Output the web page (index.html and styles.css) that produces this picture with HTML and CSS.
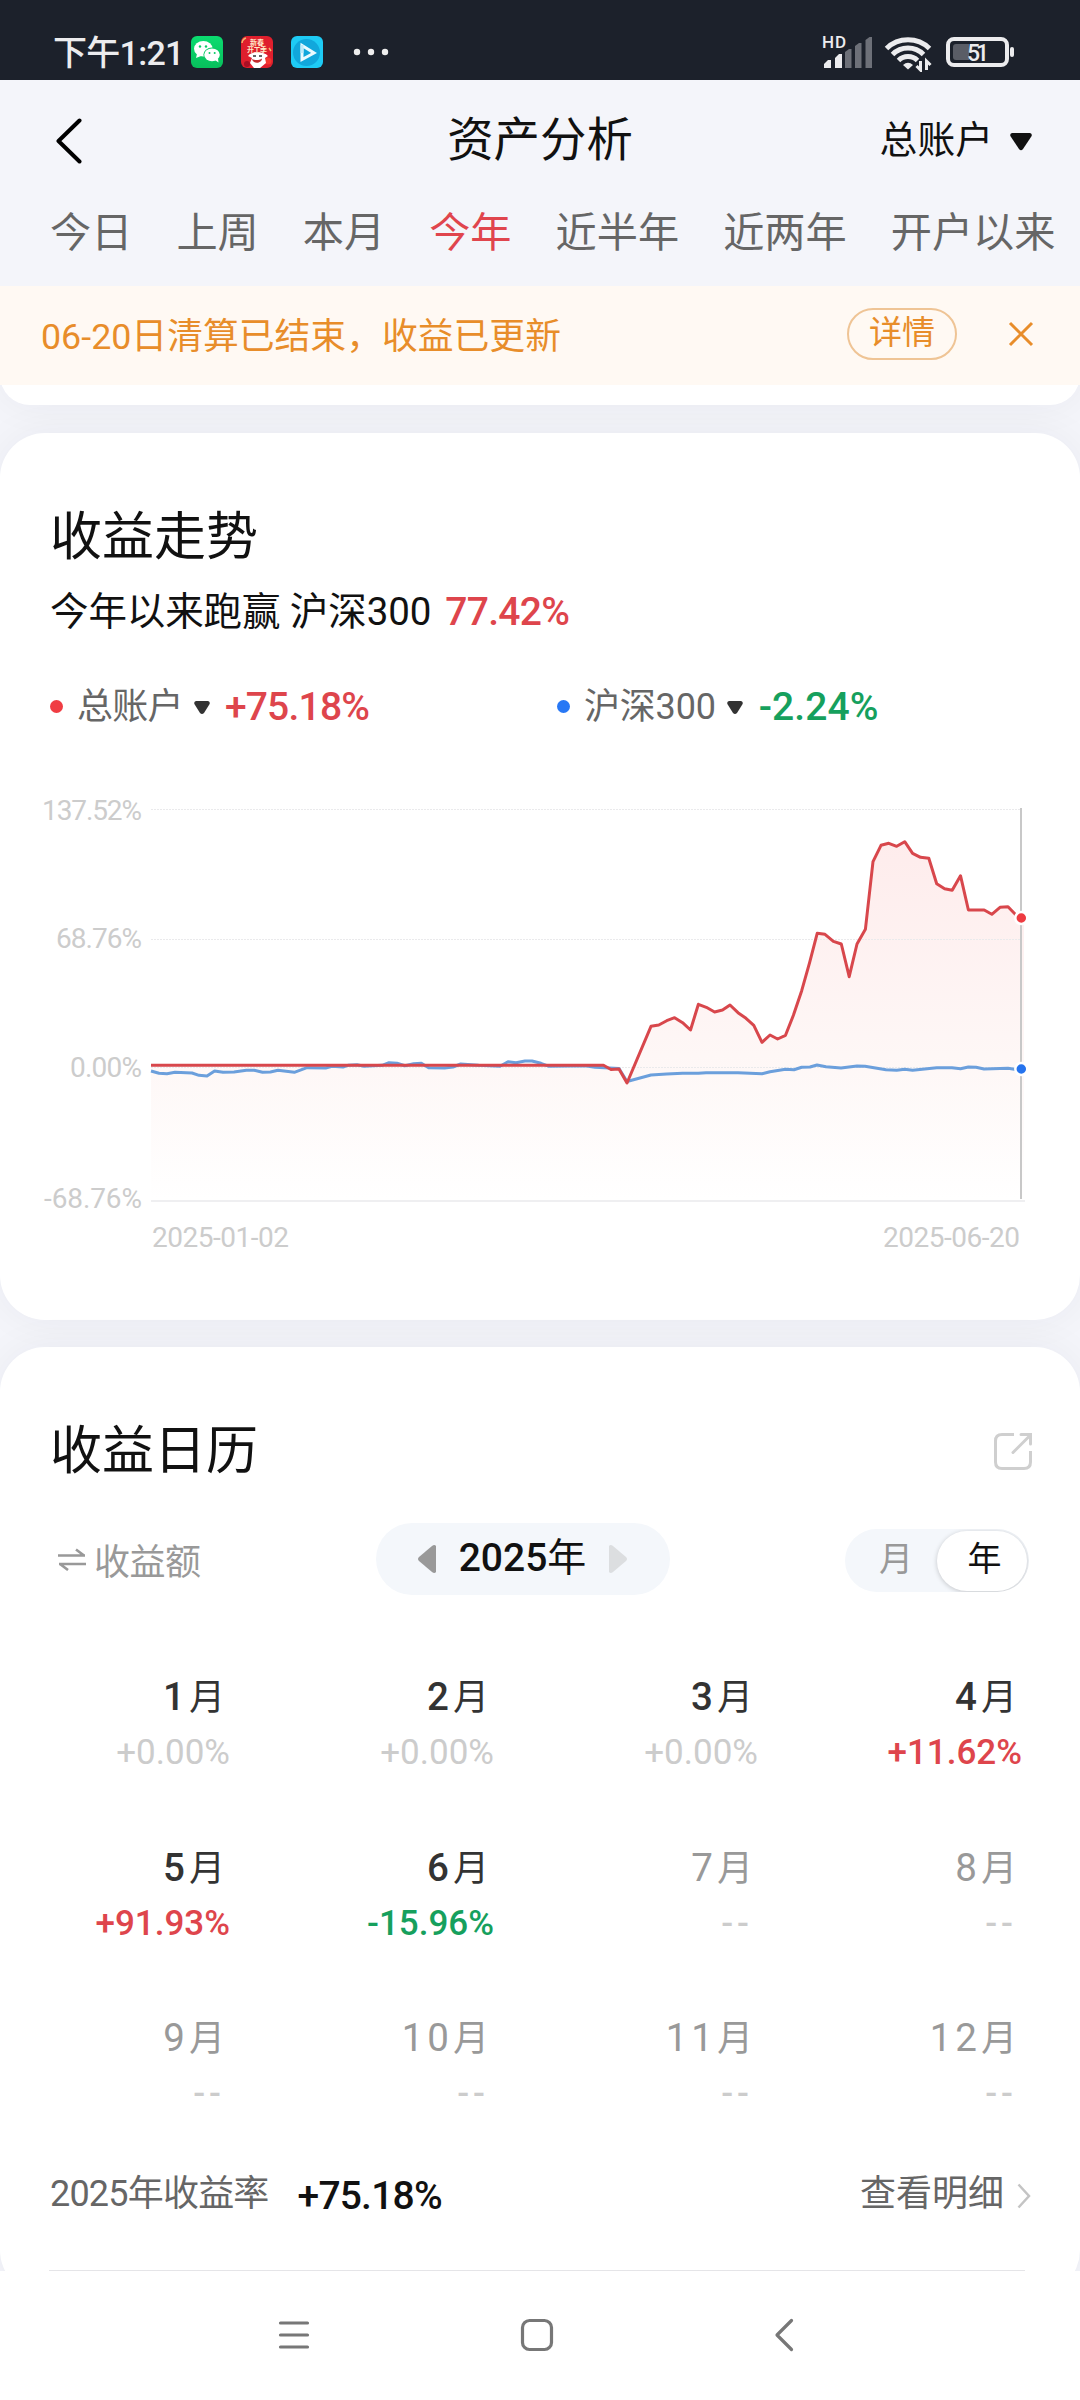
FILE: index.html
```html
<!DOCTYPE html>
<html lang="zh-CN">
<head>
<meta charset="utf-8">
<title>资产分析</title>
<link rel="stylesheet" href="styles.css">
</head>
<body>
<div class="screen">
  <div class="status-bar">
    <span class="clock">下午1:21</span>
    <div class="notif-icons">
      <svg width="32" height="32" viewBox="0 0 32 32">
        <defs><linearGradient id="wx" x1="0" y1="0" x2="0" y2="1"><stop offset="0" stop-color="#0bdc70"/><stop offset="1" stop-color="#08bf5c"/></linearGradient></defs>
        <rect width="32" height="32" rx="6" fill="url(#wx)"/>
        <ellipse cx="12.3" cy="12.8" rx="9.3" ry="7.8" fill="#fff"/><path d="M6 18l-1 4 5-2z" fill="#fff"/>
        <ellipse cx="21" cy="18.8" rx="8.6" ry="7.2" fill="#0acb65"/>
        <ellipse cx="21" cy="18.8" rx="7.8" ry="6.4" fill="#fff"/><path d="M24 24l3.5 2.5-.5-4z" fill="#fff"/>
        <g fill="#0acb65"><circle cx="9" cy="10.5" r="1.2"/><circle cx="15" cy="10.5" r="1.2"/><circle cx="18.5" cy="17" r="1"/><circle cx="23.7" cy="17" r="1"/></g>
      </svg>
      <svg width="32" height="32" viewBox="0 0 32 32">
        <rect width="32" height="32" rx="6" fill="#df1f2d"/>
        <path d="M1 7a6 6 0 0 1 4-5M28 12l2 3" stroke="#f2b56c" stroke-width="1.5" fill="none"/>
        <circle cx="6" cy="28" r="3" fill="#a90f24"/><circle cx="27" cy="25" r="3.5" fill="#f2372f"/>
        <path d="M7 20c3-5 16-5 20 0l-3 2 1 5-6 5h-6l-4-5 2-5z" fill="#fff"/>
        <path d="M12 20h3M18 20h3" stroke="#333" stroke-width="1.4"/>
        <path d="M11 23c3 1.5 7 1.500 10-.5 0 5-9 6-10 .5z" fill="#c22a2d"/>
        <text x="16" y="8.500" class="badge-text">新春</text><text x="16" y="15.500" class="badge-text" textLength="20">开工季</text>
      </svg>
      <svg width="32" height="32" viewBox="0 0 32 32">
        <rect width="32" height="32" rx="6" fill="#1ecbf5"/><circle cx="15.500" cy="16.500" r="13.500" fill="#11a7dc"/>
        <path d="M11 9.500v14l12-6.500z" fill="none" stroke="#eafaff" stroke-width="3"/><path d="M11 9v8" stroke="#bdeafa" stroke-width="3"/>
      </svg>
    </div>
    <svg class="more" width="36" height="8" viewBox="0 0 36 8" fill="#eee"><circle cx="4" cy="4" r="3.200"/><circle cx="18" cy="4" r="3.200"/><circle cx="32" cy="4" r="3.200"/></svg>
    <svg class="sys-icons" width="196" height="40" viewBox="820 32 196 40">
      <text x="822" y="48" class="hd" textLength="24">HD</text>
      <g fill="#ececee"><path d="M824 68v-4l4-4h3v8z"/><path d="M835 68v-10l4-4h3v14z"/></g>
      <g fill="#6d7078"><path d="M845 68v-16l4-3h2.500v19z"/><path d="M855 68v-22l4-3h2.500v25z"/><path d="M865.500 68v-28l4-3h2.500v31z"/></g>
      <g fill="none" stroke="#ececee" stroke-width="5"><path d="M886.500 48.500a31 31 0 0 1 43 0"/><path d="M892.500 54.500a22 22 0 0 1 31 0"/><path d="M898.500 60.500a13.500 13.500 0 0 1 19 0"/></g>
      <path d="M903 65q5-4.500 10 0l-5 4.500z" fill="#ececee"/>
      <path d="M920.500 61v9l-4-4M926.500 70v-9l4 4" fill="none" stroke="#ececee" stroke-width="3"/>
      <rect x="948" y="39" width="59" height="26" rx="6" fill="none" stroke="#ececee" stroke-width="4"/>
      <path d="M969 44h-13q-3 0-3 3v10q0 3 3 3h13z" fill="#5a5d66"/>
      <rect x="1010" y="47" width="4" height="10" rx="2" fill="#ececee"/>
      <text x="967" y="60.500" class="battery" textLength="22">51</text>
    </svg>
  </div>

  <header class="title-bar">
    <svg class="back" width="28" height="46" viewBox="0 0 28 46"><path d="M24.500 2.500L3.500 23l21 20.500" fill="none" stroke="#000" stroke-width="4" stroke-linecap="round" stroke-linejoin="round"/></svg>
    <h1>资产分析</h1>
    <div class="account">总账户<svg width="24" height="20" viewBox="0 0 24 20"><path d="M3 1h18q3 1 1 4l-8 12q-2 2.500-4 0L2 5q-2-3 1-4z" fill="#111"/></svg></div>
  </header>
  <nav class="tabs"><span>今日</span><span>上周</span><span>本月</span><span class="active">今年</span><span>近半年</span><span>近两年</span><span>开户以来</span></nav>

  <div class="notice">
    <span class="notice-text">06-20日清算已结束，收益已更新</span>
    <span class="detail">详情</span>
    <svg width="26" height="26" viewBox="0 0 26 26"><path d="M2 2l22 22M24 2L2 24" stroke="#e88d2a" stroke-width="3"/></svg>
  </div>

  <main class="content">
    <section class="card prev"></section>

    <section class="card trend">
      <h2>收益走势</h2>
      <p class="beat">今年以来跑赢 沪深300<b class="up">77.42%</b></p>
      <div class="legend">
        <div class="series"><i class="dot red"></i><span class="name">总账户</span><svg width="16" height="14" viewBox="0 0 16 14"><path d="M2 0h12q3 1 1 4l-5 8q-2 2-4 0L1 4q-2-3 1-4z" fill="#333"/></svg><b class="up">+75.18%</b></div>
        <div class="series second"><i class="dot blue"></i><span class="name">沪深300</span><svg width="16" height="14" viewBox="0 0 16 14"><path d="M2 0h12q3 1 1 4l-5 8q-2 2-4 0L1 4q-2-3 1-4z" fill="#333"/></svg><b class="down">-2.24%</b></div>
      </div>
      <svg class="chart" width="1080" height="480" viewBox="0 780 1080 480">
        <defs><linearGradient id="area" gradientUnits="userSpaceOnUse" x1="0" y1="840" x2="0" y2="1200"><stop offset="0" stop-color="#feecec"/><stop offset=".6" stop-color="#fef7f6"/><stop offset="1" stop-color="#fff"/></linearGradient></defs>
        <path fill="url(#area)" d="M151 1200V1065.300H603.500L611 1069.500 619 1069 627 1083 651 1026.300 658.800 1025 666.700 1020.700 674.600 1017.700 682.600 1022.700 690.500 1030 698.400 1004.300 706.300 1007.300 714.600 1012 722.500 1010 730 1005 738 1012.700 746 1018.300 753.800 1025.300 762 1042.300 770 1035 777.600 1039 785.500 1035.300 793.400 1015.300 801.700 990.700 809.600 962.700 817.200 933.300 825 934.300 833.400 941.300 841.300 944 849.200 976.700 857 944 865.400 929.300 873 861.700 881 845.300 888.800 843.300 896.700 846.300 904.700 841.700 912.600 853.300 920.500 857.300 928.800 858.300 936.700 883.700 944.600 888.700 952.200 890.300 960.500 875.700 968.400 910 984.200 910 991.800 914.300 1000 907.300 1008 906.700 1016 915 1024 918V1200Z"/>
        <g stroke="#eaeaec" stroke-width="1"><path d="M151 809.500H1021M151 939.500H1021M151 1067.500H1021" stroke-dasharray="2 1"/><path d="M151 1201H1025" stroke-width="1.500"/></g>
        <path fill="none" stroke="#6b9fdc" stroke-width="3" stroke-linejoin="round" d="M151 1071L159 1073.300 167 1073.700 175 1072.300 192 1073 199 1075.300 207 1076 214.600 1071 223 1072.300 234 1072 246.400 1070.300 254.300 1070.300 262.500 1072.300 270.400 1072 278 1070.300 294.300 1072.300 307 1067.700 325.700 1068 332 1066.300 343 1067 348 1065.300 357 1064.700 364 1066.300 382 1065.300 389 1062.700 397 1063.300 405 1065.700 413.600 1063.700 421.400 1063.300 428.600 1067.700 444.600 1068 453 1067 460.700 1064 478.600 1065.300 500 1066.300 508 1061.700 516 1062.700 525 1061 532 1061 541 1063.300 549 1066.300 571 1066 585 1065.700 595 1067.300 619 1068.500 627 1081.500 651 1075 666.700 1074 682.600 1073.300 698.400 1073.300 706 1072.700 738 1072.700 762 1073.700 770 1071.700 785.500 1069.300 794 1069.700 801.700 1067.300 810 1067 817 1065 826 1066.700 841 1068 857 1066 865 1066.300 886 1069.700 896.700 1070.300 904.700 1069.300 912.600 1070.300 936.700 1067.700 952 1067.700 960.500 1068.700 968.400 1067 976 1067.300 984 1069 1008 1068.300 1016 1069.500"/>
        <path fill="none" stroke="#d8474c" stroke-width="3" stroke-linejoin="round" d="M151 1065.300H603.500L611 1069.500 619 1069 627 1083 651 1026.300 658.800 1025 666.700 1020.700 674.600 1017.700 682.600 1022.700 690.500 1030 698.400 1004.300 706.300 1007.300 714.600 1012 722.500 1010 730 1005 738 1012.700 746 1018.300 753.800 1025.300 762 1042.300 770 1035 777.600 1039 785.500 1035.300 793.400 1015.300 801.700 990.700 809.600 962.700 817.200 933.300 825 934.300 833.400 941.300 841.300 944 849.200 976.700 857 944 865.400 929.300 873 861.700 881 845.300 888.800 843.300 896.700 846.300 904.700 841.700 912.600 853.300 920.500 857.300 928.800 858.300 936.700 883.700 944.600 888.700 952.200 890.300 960.500 875.700 968.400 910 984.200 910 991.800 914.300 1000 907.300 1008 906.700 1016 915"/>
        <path d="M1021 808V1199" stroke="#c8c8c8" stroke-width="2"/>
        <g stroke="#fff" stroke-width="2.500"><circle cx="1021.300" cy="918" r="6" fill="#ee3b41"/><circle cx="1021.300" cy="1069" r="6" fill="#2573ee"/></g>
        <g class="axis">
          <text x="42" y="820" textLength="100">137.52%</text>
          <text x="56" y="948" textLength="86">68.76%</text>
          <text x="70" y="1077" textLength="72">0.00%</text>
          <text x="44" y="1207.500" textLength="98">-68.76%</text>
          <text x="152" y="1247" textLength="137">2025-01-02</text>
          <text x="883" y="1247" textLength="137">2025-06-20</text>
        </g>
      </svg>
    </section>

    <section class="card calendar">
      <div class="card-head"><h2>收益日历</h2>
        <svg width="40" height="40" viewBox="0 0 40 40" fill="none" stroke="#cfcfcf" stroke-width="3"><path d="M21 2.500H9q-6.500 0-6.500 6.500v21q0 6.500 6.500 6.500h22q6.500 0 6.500-6.500V19"/><path d="M20 20.500L37 3.500M28 2.500h9.500V12" stroke-linecap="round"/></svg>
      </div>
      <div class="controls">
        <div class="swap"><svg width="28" height="24" viewBox="0 0 28 24" fill="none" stroke="#999" stroke-width="2.600"><path d="M0 8.500h27M18 2.500l8 6M28 17H1M10 23l-8-6"/></svg><span>收益额</span></div>
        <div class="year"><svg width="18" height="30" viewBox="0 0 18 30"><path d="M18 2v26q-1.500 2-4 0L1 17q-2-2 0-4L14 2q2.500-2 4 0z" fill="#999"/></svg><span><b>2025</b>年</span><svg width="18" height="30" viewBox="0 0 18 30"><path d="M0 2v26q1.500 2 4 0l13-11q2-2 0-4L4 2Q1.500 0 0 2z" fill="#dcdee0"/></svg></div>
        <div class="toggle"><span>月</span><span class="on">年</span></div>
      </div>
      <div class="months">
        <div><em><b>1</b>月</em><span class="flat">+0.00%</span></div>
        <div><em><b>2</b>月</em><span class="flat">+0.00%</span></div>
        <div><em><b>3</b>月</em><span class="flat">+0.00%</span></div>
        <div><em><b>4</b>月</em><span class="up">+11.62%</span></div>
        <div><em><b>5</b>月</em><span class="up">+91.93%</span></div>
        <div><em><b>6</b>月</em><span class="down">-15.96%</span></div>
        <div class="future"><em><b>7</b>月</em><span>--</span></div>
        <div class="future"><em><b>8</b>月</em><span>--</span></div>
        <div class="future"><em><b>9</b>月</em><span>--</span></div>
        <div class="future"><em><b>10</b>月</em><span>--</span></div>
        <div class="future"><em><b>11</b>月</em><span>--</span></div>
        <div class="future"><em><b>12</b>月</em><span>--</span></div>
      </div>
      <div class="summary"><span class="label">2025年收益率</span><b>+75.18%</b><span class="link">查看明细</span><svg width="14" height="28" viewBox="0 0 14 28"><path d="M1.500 2.500L12 14 1.500 25.500" fill="none" stroke="#c4c4c4" stroke-width="2.500"/></svg></div>
      <div class="divider"></div>
    </section>
  </main>

  <div class="nav-bar">
    <svg width="1080" height="129" viewBox="0 2271 1080 129" fill="none" stroke="#777" stroke-width="3.200" stroke-linecap="round" stroke-linejoin="round"><path d="M280.500 2323h27M280.500 2335h27M280.500 2347h27"/><rect x="522.500" y="2320.500" width="29" height="29" rx="7"/><path d="M791.500 2320.500L777 2335l14.500 14.500"/></svg>
  </div>
</div>
</body>
</html>
```
FILE: styles.css
```css
* { box-sizing: border-box; margin: 0; padding: 0; }
body { width: 1080px; height: 2400px; overflow: hidden; background: #f4f5fa; font-family: Roboto, "Noto Sans CJK SC", sans-serif; color: #111; }
svg { display: block; flex: none; }
h1, h2, em, b { font-weight: 400; font-style: normal; }
.screen { display: flex; flex-direction: column; height: 2400px; white-space: nowrap; }

.status-bar { height: 80px; flex: none; background: #1c212b; display: flex; align-items: center; padding: 24px 64px 0 53px; }
.clock { width: 138px; font-size: 34px; line-height: 40px; font-weight: 500; color: #ececee; letter-spacing: -0.700px; padding-top: 1px; }
.notif-icons { display: flex; gap: 18px; }
.more { margin-left: 30px; }
.sys-icons { margin-left: auto; }
.badge-text { font-size: 7px; font-weight: 700; fill: #ffe9c8; text-anchor: middle; }
.hd { font-size: 17px; font-weight: 500; fill: #ececee; }
.battery { font-size: 23px; font-weight: 500; fill: #ececee; }

.title-bar { height: 119px; flex: none; display: grid; grid-template-columns: 1fr auto 1fr; align-items: center; padding: 0 47px 0 47px; }
.title-bar .back { margin: 3px 0 0 8px; }
h1 { font-size: 46.400px; line-height: 60px; }
.account { display: flex; justify-content: flex-end; align-items: center; gap: 16px; font-size: 37.800px; line-height: 50px; padding-top: 1px; }
.account svg { margin-top: 3px; }
.tabs { height: 87px; flex: none; display: flex; gap: 44px; padding: 4px 0 0 50px; font-size: 41.200px; line-height: 60px; color: #666; }
.tabs .active { color: #e0454d; }

.notice { height: 99px; flex: none; display: flex; align-items: center; padding: 0 46px 0 41px; background: #fff9f3; color: #e88d2a; position: relative; z-index: 1; }
.notice svg { margin-bottom: 3px; }
.notice-text { font-size: 35.800px; line-height: 50px; padding-top: 2px; }
.detail { margin: 0 51px 3px auto; width: 110px; height: 52px; border: 2px solid #efc495; border-radius: 26px; font-size: 33px; line-height: 45px; text-align: center; }

.content { flex: 1; display: flex; flex-direction: column; min-height: 0; overflow: hidden; }
.card { flex: none; background: #fff; border-radius: 45px; box-shadow: 0 0 40px rgba(30, 35, 50, .05); }
.prev { height: 60px; margin-top: -40px; margin-bottom: 28px; }
.trend { height: 887px; padding-top: 75px; margin-bottom: 27px; }
h2 { font-size: 52px; line-height: 60px; }
.trend h2 { padding-left: 50px; }
.beat { margin-top: 19px; padding-left: 50px; font-size: 38.500px; line-height: 50px; letter-spacing: -.1px; }
.up { color: #de454c; font-weight: 500; }
.down { color: #16a05d; font-weight: 500; }
.beat b { margin-left: 14px; font-size: 39px; letter-spacing: -.7px; }
.legend { display: grid; grid-template-columns: 507px 1fr; margin-top: 45px; padding-left: 50px; }
.series { display: flex; align-items: center; height: 50px; }
.dot { width: 13px; height: 13px; border-radius: 50%; margin: 0 14px 2px 0; }
.red { background: #f03d43; }
.blue { background: #2878f5; }
.name { font-size: 36px; letter-spacing: -.7px; color: #666; line-height: 50px; margin-right: 11px; }
.series svg { margin-top: 1px; }
.series b { font-size: 39px; letter-spacing: -.8px; margin-left: 15px; }
.second .name { letter-spacing: -.2px; }
.second b { letter-spacing: .1px; margin-left: 16px; }
.chart { margin-top: 48px; }
.axis text { font-size: 28px; fill: #ccc; }

.calendar { height: 948px; padding-top: 75px; }
.card-head { display: flex; justify-content: space-between; align-items: center; height: 60px; padding: 0 47px 0 50px; }
.card-head svg { margin-bottom: 1px; }
.controls { display: grid; grid-template-columns: 318px 294px 1fr; align-items: center; height: 72px; margin-top: 41px; padding: 0 51px 0 58px; }
.swap { display: flex; align-items: center; gap: 8px; font-size: 36px; letter-spacing: -.5px; color: #999; }
.year { height: 72px; border-radius: 36px; background: #f4f7fb; display: flex; align-items: center; justify-content: space-between; padding: 0 43px 0 42px; font-size: 39px; line-height: 56px; }
.year span { padding-bottom: 3px; }
.year b { font-weight: 500; }
.toggle { justify-self: end; display: flex; width: 184px; height: 63px; border-radius: 32px; overflow: hidden; background: #f4f7fb; font-size: 34px; line-height: 57px; color: #999; padding: 2px; margin-top: 3px; }
.toggle span { width: 90px; height: 60px; text-align: center; padding-left: 8px; }
.toggle .on { background: #fff; color: #111; border-radius: 30px; box-shadow: 0 1px 5px rgba(0, 0, 0, .2); padding-left: 5px; }
.months { display: grid; grid-template-columns: repeat(4, 264px); grid-auto-rows: 170.500px; padding-top: 74px; margin-left: -34px; }
.months div { text-align: right; }
.months em { display: block; font-size: 36px; line-height: 56px; color: #333; padding-right: 5px; }
.months em b { font-size: 38.500px; font-weight: 500; letter-spacing: 4px; }
.months span { display: block; font-size: 35px; line-height: 53px; }
.months .flat { color: #ccc; }
.months .future em, .months .future b { color: #999; font-weight: 400; }
.months .future span { color: #ccc; letter-spacing: 4px; padding-right: 5px; font-weight: 500; }
.summary { display: flex; align-items: center; height: 60px; margin-top: -15px; padding: 0 49px 0 50px; font-size: 36px; line-height: 50px; color: #666; }
.label { letter-spacing: -.800px; padding-bottom: 3px; }
.summary b { margin-left: 29px; font-size: 39px; font-weight: 500; color: #111; letter-spacing: -.8px; }
.link { margin-left: auto; margin-right: 13px; padding-bottom: 3px; }
.divider { height: 2px; margin: 44px 55px 0 49px; background: #e5e5e8; }

.nav-bar { height: 129px; flex: none; background: #fff; }
```
